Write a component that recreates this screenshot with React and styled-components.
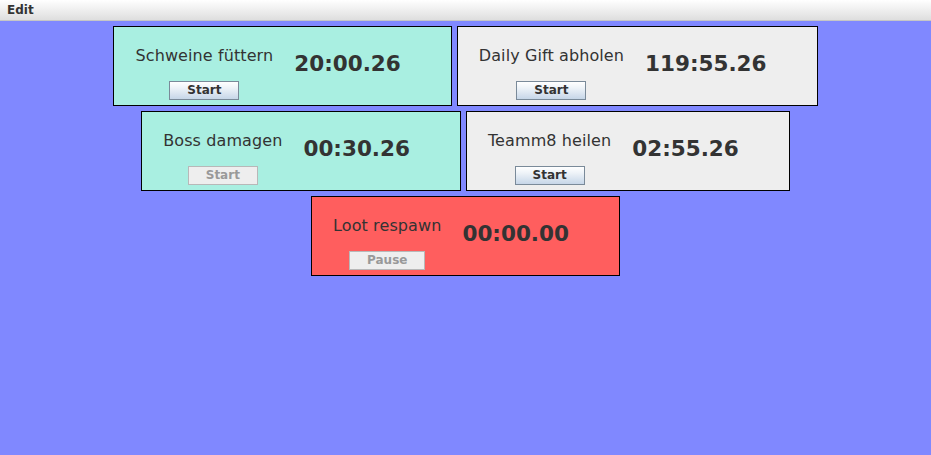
import styled, { createGlobalStyle } from 'styled-components';

const GlobalStyle = createGlobalStyle`
  html, body {
    margin: 0;
    padding: 0;
    height: 100%;
    background: #8088ff;
  }
  body {
    font-family: "DejaVu Sans", sans-serif;
    color: #333333;
  }
`;

const Frame = styled.div`
  width: 931px;
  height: 455px;
  display: flex;
  flex-direction: column;
  background: #8088ff;
  overflow: hidden;
`;

const MenuBar = styled.div`
  height: 20px;
  flex: none;
  display: flex;
  align-items: center;
  background: linear-gradient(#ffffff 0%, #f2f2f2 40%, #dedede 100%);
  border-bottom: 1px solid #c6c6c6;
`;

const MenuItem = styled.span`
  padding: 0 7px;
  font-size: 12px;
  font-weight: bold;
  color: #333333;
  line-height: 20px;
`;

const TimerArea = styled.div`
  display: flex;
  flex-wrap: wrap;
  justify-content: center;
  align-content: flex-start;
  gap: 5px;
  padding-top: 5px;
`;

const cardColors = {
  running: '#a9efe1',
  idle: '#eeeeee',
  done: '#ff5e5e',
};

const Card = styled.div`
  box-sizing: border-box;
  height: 80px;
  display: flex;
  align-items: flex-start;
  padding: 19px 50px 0 21px;
  border: 1px solid #000000;
  background: ${(p) => cardColors[p.$state]};
`;

const LeftCol = styled.div`
  display: flex;
  flex-direction: column;
  align-items: center;
  gap: 16px;
`;

const Label = styled.div`
  font-size: 16px;
  line-height: 19px;
  letter-spacing: 0.1px;
  white-space: nowrap;
  color: #333333;
`;

const Time = styled.div`
  margin: 5px 0 0 21px;
  font-size: 21.5px;
  line-height: 26px;
  font-weight: bold;
  white-space: nowrap;
  color: #333333;
`;

const Button = styled.button`
  box-sizing: border-box;
  height: 19px;
  padding: 0 17px;
  font-family: "DejaVu Sans", sans-serif;
  font-size: 12px;
  font-weight: bold;
  line-height: 17px;
  color: ${(p) => (p.disabled ? '#999999' : '#333333')};
  border: 1px solid ${(p) => (p.disabled ? '#b8b8b8' : '#7a8a99')};
  border-radius: 0;
  background: ${(p) =>
    p.disabled ? '#eeeeee' : 'linear-gradient(#ffffff 0%, #eef3f8 35%, #c6d6e8 100%)'};
`;

const timers = [
  { name: 'Schweine füttern', time: '20:00.26', state: 'running', action: 'Start', disabled: false },
  { name: 'Daily Gift abholen', time: '119:55.26', state: 'idle', action: 'Start', disabled: false },
  { name: 'Boss damagen', time: '00:30.26', state: 'running', action: 'Start', disabled: true },
  { name: 'Teamm8 heilen', time: '02:55.26', state: 'idle', action: 'Start', disabled: false },
  { name: 'Loot respawn', time: '00:00.00', state: 'done', action: 'Pause', disabled: true },
];

export default function App() {
  return (
    <>
      <GlobalStyle />
      <Frame>
        <MenuBar>
          <MenuItem>Edit</MenuItem>
        </MenuBar>
        <TimerArea>
          {timers.map((t) => (
            <Card key={t.name} $state={t.state}>
              <LeftCol>
                <Label>{t.name}</Label>
                <Button disabled={t.disabled}>{t.action}</Button>
              </LeftCol>
              <Time>{t.time}</Time>
            </Card>
          ))}
        </TimerArea>
      </Frame>
    </>
  );
}
